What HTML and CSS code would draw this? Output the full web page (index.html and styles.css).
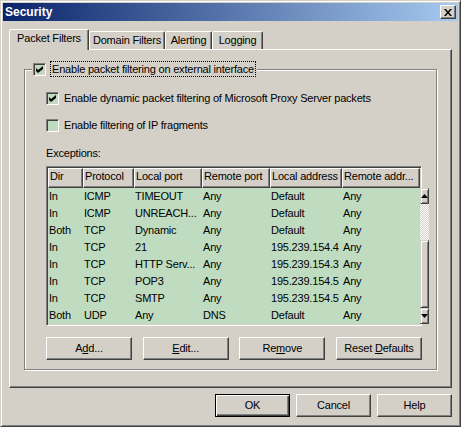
FILE: index.html
```html
<!DOCTYPE html>
<html lang="en">
  <head>
    <meta charset="UTF-8" />
    <title>Security</title>
    <link rel="stylesheet" href="styles.css">
  </head>
  <body>
    <div class="window">
      <div class="titlebar">
        <span class="title">Security</span>
        <button class="close" aria-label="Close">
          <svg width="8" height="7" viewBox="0 0 8 7"><path d="M0 0h2l2 2.5 2-2.5h2l-3 3.5 3 3.5h-2l-2-2.5-2 2.5h-2l3-3.5z" fill="#000"/></svg>
        </button>
      </div>

      <div class="dialog">
        <div class="tabs">
          <div class="tab active tab-packet">Packet Filters</div>
          <div class="tab tab-domain">Domain Filters</div>
          <div class="tab tab-alert">Alerting</div>
          <div class="tab tab-log">Logging</div>
        </div>

        <div class="panel">
          <fieldset class="group">
            <legend class="legend">
              <label class="check">
                <span class="box"><svg width="7" height="7" viewBox="0 0 7 7"><path d="M0 2l2 2 5-4v3l-5 4-2-2z" fill="#000"/></svg></span>
                <span class="focus">Enable packet filtering on external interface</span>
              </label>
            </legend>

            <div class="group-body">
              <label class="check opt">
                <span class="box"><svg width="7" height="7" viewBox="0 0 7 7"><path d="M0 2l2 2 5-4v3l-5 4-2-2z" fill="#000"/></svg></span>
                <span>Enable dynamic packet filtering of Microsoft Proxy Server packets</span>
              </label>
              <label class="check opt">
                <span class="box"></span>
                <span>Enable filtering of IP fragments</span>
              </label>

              <div class="caption">Exceptions:</div>

              <div class="list">
                <div class="list-head">
                  <div class="hd col-dir">Dir</div>
                  <div class="hd col-proto">Protocol</div>
                  <div class="hd col-lport">Local port</div>
                  <div class="hd col-rport">Remote port</div>
                  <div class="hd col-laddr">Local address</div>
                  <div class="hd col-raddr">Remote addr...</div>
                </div>
                <div class="list-body">
                  <div class="rows">
                    <div class="row"><span class="col-dir">In</span><span class="col-proto">ICMP</span><span class="col-lport">TIMEOUT</span><span class="col-rport">Any</span><span class="col-laddr">Default</span><span class="col-raddr">Any</span></div>
                    <div class="row"><span class="col-dir">In</span><span class="col-proto">ICMP</span><span class="col-lport">UNREACH...</span><span class="col-rport">Any</span><span class="col-laddr">Default</span><span class="col-raddr">Any</span></div>
                    <div class="row"><span class="col-dir">Both</span><span class="col-proto">TCP</span><span class="col-lport">Dynamic</span><span class="col-rport">Any</span><span class="col-laddr">Default</span><span class="col-raddr">Any</span></div>
                    <div class="row"><span class="col-dir">In</span><span class="col-proto">TCP</span><span class="col-lport">21</span><span class="col-rport">Any</span><span class="col-laddr">195.239.154.4</span><span class="col-raddr">Any</span></div>
                    <div class="row"><span class="col-dir">In</span><span class="col-proto">TCP</span><span class="col-lport">HTTP Serv...</span><span class="col-rport">Any</span><span class="col-laddr">195.239.154.3</span><span class="col-raddr">Any</span></div>
                    <div class="row"><span class="col-dir">In</span><span class="col-proto">TCP</span><span class="col-lport">POP3</span><span class="col-rport">Any</span><span class="col-laddr">195.239.154.5</span><span class="col-raddr">Any</span></div>
                    <div class="row"><span class="col-dir">In</span><span class="col-proto">TCP</span><span class="col-lport">SMTP</span><span class="col-rport">Any</span><span class="col-laddr">195.239.154.5</span><span class="col-raddr">Any</span></div>
                    <div class="row"><span class="col-dir">Both</span><span class="col-proto">UDP</span><span class="col-lport">Any</span><span class="col-rport">DNS</span><span class="col-laddr">Default</span><span class="col-raddr">Any</span></div>
                  </div>
                  <div class="vscroll">
                    <div class="sb-btn"><svg width="7" height="4" viewBox="0 0 7 4"><path d="M3.5 0L7 4H0z" fill="#000"/></svg></div>
                    <div class="sb-track"></div>
                    <div class="sb-thumb"></div>
                    <div class="sb-btn"><svg width="7" height="4" viewBox="0 0 7 4"><path d="M0 0h7L3.5 4z" fill="#000"/></svg></div>
                  </div>
                </div>
              </div>

              <div class="actions">
                <button class="btn">A<u>d</u>d...</button>
                <button class="btn"><u>E</u>dit...</button>
                <button class="btn">Re<u>m</u>ove</button>
                <button class="btn">Reset <u>D</u>efaults</button>
              </div>
            </div>
          </fieldset>
        </div>

        <div class="footer">
          <button class="btn btn-small btn-default">OK</button>
          <button class="btn btn-small">Cancel</button>
          <button class="btn btn-small">Help</button>
        </div>
      </div>
    </div>
  </body>
</html>
```

FILE: styles.css
```css
* {
  margin: 0;
  padding: 0;
  box-sizing: border-box;
}

html,
body {
  width: 461px;
  height: 427px;
  overflow: hidden;
}

body {
  background: #d4d0c8;
  font-family: "Liberation Sans", Arial, sans-serif;
  font-size: 11px;
  letter-spacing: -0.2px;
  color: #000;
}

.window {
  width: 461px;
  height: 427px;
  padding: 2px;
  border: 1px solid;
  border-color: #d4d0c8 #404040 #404040 #d4d0c8;
  box-shadow: inset 1px 1px 0 #fff, inset -1px -1px 0 #808080;
  background: #d4d0c8;
}

/* caption */
.titlebar {
  height: 18px;
  display: flex;
  align-items: center;
  justify-content: space-between;
  padding: 0 2px;
  background: linear-gradient(to right, #0a246a, #a6caf0);
}

.title {
  color: #fff;
  font-weight: bold;
  font-size: 12px;
  line-height: 18px;
  letter-spacing: 0;
}

.close {
  width: 16px;
  height: 14px;
  display: flex;
  align-items: center;
  justify-content: center;
  background: #d4d0c8;
  border: 1px solid;
  border-color: #fff #404040 #404040 #fff;
  box-shadow: inset -1px -1px 0 #808080;
}

.dialog {
  padding: 8px 6px 0;
}

/* tabs */
.tabs {
  display: flex;
  align-items: flex-end;
  height: 20px;
}

.tab {
  height: 18px;
  line-height: 16px;
  text-align: center;
  white-space: nowrap;
  border: 1px solid;
  border-bottom: none;
  border-color: #fff #404040 transparent #fff;
  border-radius: 2px 2px 0 0;
  box-shadow: inset -1px 0 0 #808080;
}

.tab.active {
  position: relative;
  z-index: 1;
  height: 21px;
  margin-bottom: -1px;
  background: #d4d0c8;
}

.tab-packet { width: 80px; }
.tab-domain { width: 76px; }
.tab-alert { width: 47px; }
.tab-log { width: 51px; }

.panel {
  width: 443px;
  height: 339px;
  padding: 11px 0 0 14px;
  border: 1px solid;
  border-color: #fff #404040 #404040 #fff;
  box-shadow: inset -1px -1px 0 #808080;
}

/* group box */
.group {
  width: 413px;
  padding: 15px 0 9px;
  border: 1px solid #808080;
  box-shadow: inset 1px 1px 0 #fff, 1px 1px 0 #fff;
}

.legend {
  margin-left: 7px;
  padding: 0 1px;
  background: #d4d0c8;
}

.group-body {
  padding-left: 21px;
}

.check {
  display: flex;
  align-items: center;
  gap: 4px;
  white-space: nowrap;
}

.box {
  width: 13px;
  height: 13px;
  flex: none;
  display: flex;
  align-items: center;
  justify-content: center;
  background: #c0dcc0;
  border: 1px solid;
  border-color: #808080 #fff #fff #808080;
  box-shadow: inset 1px 1px 0 #404040, inset -1px -1px 0 #d4d0c8;
}

.focus {
  border: 1px dotted #000;
  padding: 0 1px;
  line-height: 14px;
}

.opt {
  height: 13px;
  line-height: 13px;
  gap: 5px;
}

.opt + .opt {
  margin-top: 14px;
}

.caption {
  margin-top: 15px;
  line-height: 13px;
}

/* list view */
.list {
  width: 376px;
  height: 160px;
  margin-top: 6px;
  padding: 1px;
  border: 1px solid;
  border-color: #808080 #fff #fff #808080;
  box-shadow: inset 1px 1px 0 #404040, inset -1px -1px 0 #d4d0c8;
}

.list-head {
  display: flex;
  height: 20px;
}

.hd {
  padding-left: 1px;
  line-height: 14px;
  white-space: nowrap;
  overflow: hidden;
  border: 1px solid;
  border-color: #fff #404040 #404040 #fff;
  box-shadow: inset -1px -1px 0 #808080;
}

.col-dir { width: 35px; }
.col-proto { width: 51px; }
.col-lport { width: 68px; }
.col-rport { width: 68px; }
.col-laddr { width: 72px; }
.col-raddr { width: 78px; }

.hd.col-raddr {
  flex: 1;
}

.list-body {
  display: flex;
  height: 136px;
}

.rows {
  flex: 1;
  background: #c0dcc0;
}

.row {
  display: flex;
  height: 17px;
  line-height: 17px;
  white-space: nowrap;
}

.row span {
  flex: none;
  padding-left: 1px;
  overflow: hidden;
}

.vscroll {
  width: 16px;
  display: flex;
  flex-direction: column;
}

.sb-btn,
.sb-thumb {
  background: #d4d0c8;
  border: 1px solid;
  border-color: #d4d0c8 #404040 #404040 #d4d0c8;
  box-shadow: inset 1px 1px 0 #fff, inset -1px -1px 0 #808080;
}

.sb-btn {
  height: 16px;
  display: flex;
  align-items: center;
  justify-content: center;
}

.sb-track {
  height: 36px;
  background: repeating-conic-gradient(#d4d0c8 0 25%, #fff 0 50%) 0 0 / 2px 2px;
}

.sb-thumb {
  height: 68px;
}

/* buttons */
.actions {
  display: flex;
  justify-content: space-between;
  width: 376px;
  margin-top: 11px;
}

.btn {
  width: 86px;
  height: 23px;
  font: inherit;
  letter-spacing: inherit;
  color: #000;
  line-height: 19px;
  text-align: center;
  background: #d4d0c8;
  border: 1px solid;
  border-color: #fff #404040 #404040 #fff;
  box-shadow: inset -1px -1px 0 #808080;
}

.btn u {
  text-decoration: underline;
}

.footer {
  display: flex;
  justify-content: flex-end;
  gap: 6px;
  width: 443px;
  margin-top: 6px;
}

.btn-small {
  width: 75px;
}

.btn-default {
  border-color: #000;
  box-shadow: inset 1px 1px 0 #fff, inset -1px -1px 0 #404040, inset -2px -2px 0 #808080;
}
```
